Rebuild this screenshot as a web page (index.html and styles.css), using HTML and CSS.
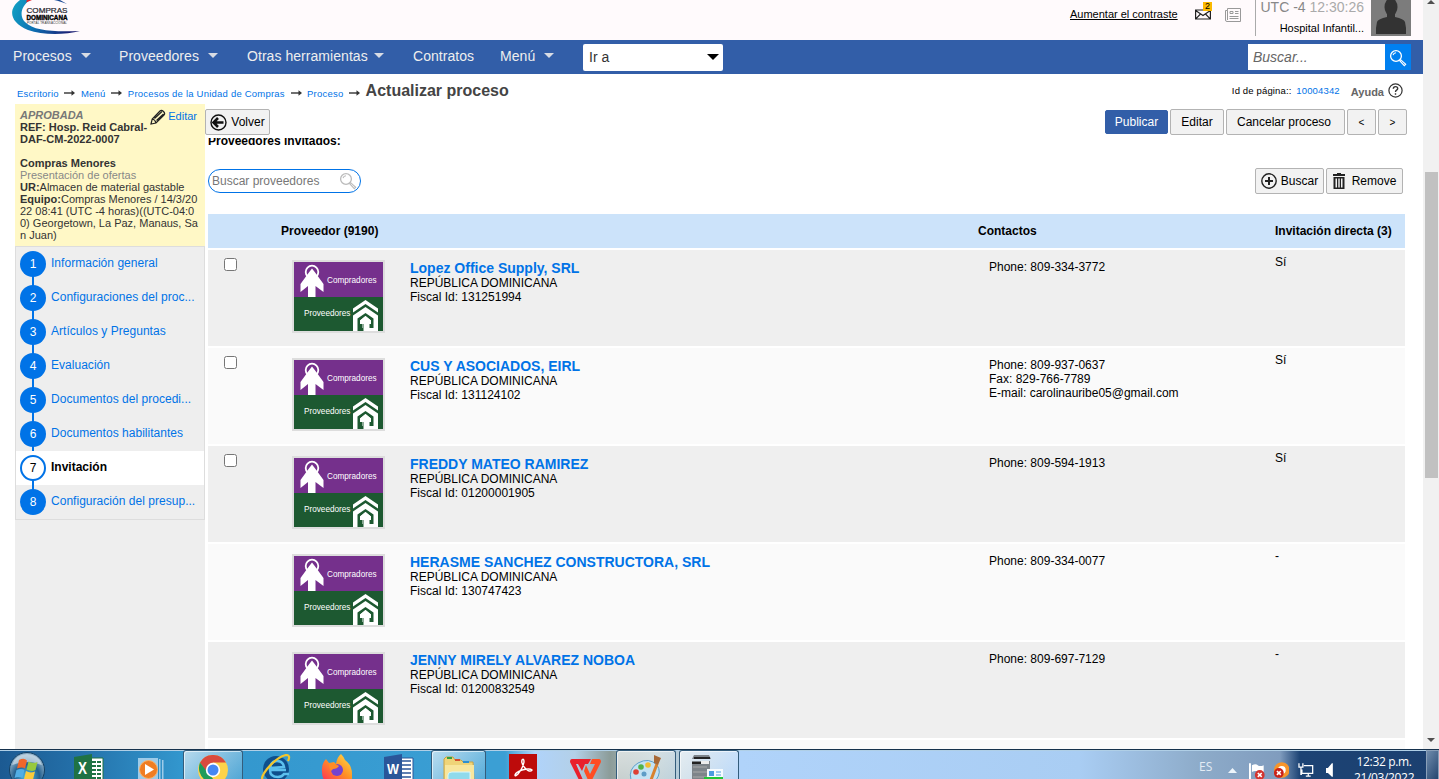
FILE: index.html
```html
<!DOCTYPE html>
<html lang="es">
<head>
    <meta charset="UTF-8">
    <meta name="viewport" content="width=device-width, initial-scale=1.0">
    <title>Actualizar proceso</title>
    <link rel="stylesheet" href="styles.css">
</head>
<body>

    <!-- Iconos compartidos -->
    <svg class="symbols" width="0" height="0">
        <symbol id="arrow" viewBox="0 0 12 6">
            <path d="M0 3h9" stroke="#333" stroke-width="1.4"/>
            <path d="M7.5 .3L11 3 7.5 5.7z" fill="#333"/>
        </symbol>
        <symbol id="lupa" viewBox="0 0 18 18">
            <circle cx="7" cy="7" r="5.4" fill="none" stroke="currentColor" stroke-width="1.3"/>
            <path d="M4 6.2Q4.700 4 7 3.800M10.700 11.700l1-1 5 4.600-1.400 1.400z" fill="none" stroke="currentColor" stroke-width="1.1"/>
        </symbol>
        <symbol id="comprador" viewBox="0 0 24 33">
            <circle cx="12" cy="8" r="6.300" fill="none" stroke="#fff" stroke-width="1.800"/>
            <path d="M12 4.500L15.500 9 23.500 20v8L15.500 22v11H8V22L.5 28v-8L8.500 9z" fill="#fff"/>
        </symbol>
        <symbol id="proveedor" viewBox="0 0 25 31">
            <path d="M0 8.500L12.500 0 25 8.500v4L12.500 4 0 12.500z" fill="#fff"/>
            <path d="M0 15.500L12.500 7 25 15.500V31H15v-7h3.500l-6-6-6 6H10v4H8v-4H5v7H0z" fill="#fff"/>
            <path d="M4.500 31V18.500l8-5.500 8 5.500V28h-4v-5H18v-2.500l-5.500-4.500L7 20.500V23h2.500v8z" fill="#1d5931"/>
            <path d="M12.500 16L18 20.500V24h-3v4h5v3h-9.500v-7H7v-3.500z" fill="#fff"/>
        </symbol>
    </svg>

    <div class="window">
        <div class="page">

            <!-- Cabecera -->
            <header class="header">
                <svg class="brand" width="72" height="40" viewBox="0 0 72 40">
                    <defs>
                        <linearGradient id="swoosh" x1="0" y1="0" x2="1" y2=".2">
                            <stop offset="0" stop-color="#12a3c4"/>
                            <stop offset=".45" stop-color="#0d72b4"/>
                            <stop offset="1" stop-color="#1b1f74"/>
                        </linearGradient>
                    </defs>
                    <path d="M8 0h10C9 6 7 16 13 22c9 9 28 10 55 9C52 35 30 35 16 30-3 22-4 9 8 0z" fill="url(#swoosh)"/>
                    <path d="M14 2.500L20 0h-5z" fill="#e8232a"/>
                    <path d="M42 0h6l7 4C50 2 47 1 42 0z" fill="#1c4d96"/>
                    <text x="14.500" y="13" class="brand-1" textLength="41" lengthAdjust="spacingAndGlyphs">COMPRAS</text>
                    <text x="14.500" y="19.500" class="brand-2" textLength="41" lengthAdjust="spacingAndGlyphs">DOMINICANA</text>
                    <text x="15" y="23.500" class="brand-3" textLength="40">PORTAL TRANSACCIONAL</text>
                </svg>
                <div class="tools">
                    <a class="contrast">Aumentar el contraste</a>
                    <div class="mail">
                        <svg width="16" height="11" viewBox="0 0 16 11" fill="none" stroke="#222" stroke-width="1.200">
                            <path d="M.6 1h14.800v9H.6zM.6 1.500L8 6.500l7.400-5M.8 9.800L5.500 5M15.200 9.800L10.500 5"/>
                        </svg>
                        <span class="badge">2</span>
                    </div>
                    <svg class="news" width="16" height="14" viewBox="0 0 16 14" fill="none" stroke="#999">
                        <path d="M.5 2.500h2v-2h13v13H2q-1.500 0-1.500-1.500zM2.500 2.500V12M4.500 8.500h9M4.500 10.500h9M10 3.500h3.500M10 5.500h3.500"/>
                        <path d="M5 3.500h3v2H5z"/>
                    </svg>
                    <div class="user">
                        <span class="clock">UTC -4 <b>12:30:26</b></span>
                        <span class="hospital">Hospital Infantil...</span>
                    </div>
                    <svg class="avatar" width="40" height="36" viewBox="0 0 40 36">
                        <path fill="#7c7c7c" d="M0 0h40v36H0z"/>
                        <ellipse cx="20" cy="7" rx="6.500" ry="9" fill="#333"/>
                        <path d="M16 12h8v5q9 2 10 5 1.500 6 1 12H5q-.5-6 1-12 1-3 10-5z" fill="#333"/>
                    </svg>
                </div>
            </header>

            <!-- Menú principal -->
            <nav class="nav">
                <a class="item procesos drop">Procesos</a>
                <a class="item proveedores drop">Proveedores</a>
                <a class="item otras drop">Otras herramientas</a>
                <a class="item contratos">Contratos</a>
                <a class="item menu drop">Menú</a>
                <div class="goto">Ir a</div>
                <div class="search">
                    <span class="search-text">Buscar...</span>
                    <span class="search-btn"><svg width="18" height="18"><use href="#lupa"/></svg></span>
                </div>
            </nav>

            <div class="crumbs">
                <a>Escritorio</a><svg><use href="#arrow"/></svg>
                <a>Menú</a><svg><use href="#arrow"/></svg>
                <a>Procesos de la Unidad de Compras</a><svg><use href="#arrow"/></svg>
                <a>Proceso</a><svg><use href="#arrow"/></svg>
                <h1>Actualizar proceso</h1>
                <span class="page-id">Id de página:: <a>10004342</a></span>
                <span class="help">Ayuda</span>
                <svg class="help-icon" viewBox="0 0 15 15" fill="none" stroke="#333">
                    <circle cx="7.500" cy="7.500" r="6.600" stroke-width="1.200"/>
                    <path d="M5.300 5.800q0-2.200 2.200-2.200t2.200 1.900q0 1-1.100 1.700T7.500 9.100M7.500 10.300v1.500" stroke-width="1.400"/>
                </svg>
            </div>

            <div class="main">

                <!-- Resumen y pasos -->
                <aside class="sidebar">
                    <div class="summary">
                        <a class="edit">
                            <svg width="16" height="16" viewBox="0 0 16 16" fill="none" stroke="#222" stroke-width="1.200">
                                <path d="M1 15l1.200-5L10 2q1.500-1.500 3.500.5T14 6l-8 8zM2.200 10q3 .5 3.800 4M4.500 9.500L12 2.500M6.500 11.500l7-6.500"/>
                            </svg>Editar</a>
                        <em>APROBADA</em>
                        <strong>REF: Hosp. Reid Cabral-<br>DAF-CM-2022-0007</strong>
                        <strong class="kind">Compras Menores</strong>
                        <span class="phase">Presentación de ofertas</span>
                        <span><b>UR:</b>Almacen de material gastable</span>
                        <span><b>Equipo:</b>Compras Menores / 14/3/20<br>22 08:41 (UTC -4 horas)((UTC-04:0<br>0) Georgetown, La Paz, Manaus, Sa<br>n Juan)</span>
                    </div>
                    <ol class="steps">
                        <li><i>1</i><a>Información general</a></li>
                        <li><i>2</i><a>Configuraciones del proc...</a></li>
                        <li><i>3</i><a>Artículos y Preguntas</a></li>
                        <li><i>4</i><a>Evaluación</a></li>
                        <li><i>5</i><a>Documentos del procedi...</a></li>
                        <li><i>6</i><a>Documentos habilitantes</a></li>
                        <li class="active"><i>7</i><a>Invitación</a></li>
                        <li><i>8</i><a>Configuración del presup...</a></li>
                    </ol>
                </aside>

                <section class="content">
                    <div class="toolbar">
                        <button class="btn back">
                            <svg width="17" height="17" viewBox="0 0 17 17" fill="none" stroke="#111">
                                <circle cx="8.500" cy="8.500" r="7.500" stroke-width="1.400"/>
                                <path d="M3.500 8.500h10M8 4L3.500 8.500 8 13" stroke-width="2.600"/>
                            </svg>Volver</button>
                        <div class="actions">
                            <button class="btn primary">Publicar</button>
                            <button class="btn b-edit">Editar</button>
                            <button class="btn b-cancel">Cancelar proceso</button>
                            <button class="btn b-step">&lt;</button>
                            <button class="btn b-step">&gt;</button>
                        </div>
                    </div>
                    <div class="label"><span>Proveedores invitados:</span></div>

                    <div class="filter">
                        <div class="filter-box">
                            <span>Buscar proveedores</span>
                            <svg width="18" height="18"><use href="#lupa"/></svg>
                        </div>
                        <div class="filter-actions">
                            <button class="btn b-search">
                                <svg width="16" height="16" viewBox="0 0 16 16" fill="none" stroke="#222">
                                    <circle cx="8" cy="8" r="7.200" stroke-width="1.400"/>
                                    <path d="M8 4v8M4 8h8" stroke-width="2"/>
                                </svg>Buscar</button>
                            <button class="btn b-remove">
                                <svg width="12" height="16" viewBox="0 0 12 16" fill="#222">
                                    <path d="M4 0h4v1h4v2H0V1h4zM.5 4h11v12H.5zM2.500 5.500v9H4v-9zM5.300 5.500v9h1.400v-9zM8 5.500v9h1.500v-9z" fill-rule="evenodd"/>
                                </svg>Remove</button>
                        </div>
                    </div>

                    <!-- Tabla de proveedores -->
                    <div class="table">
                        <div class="row head">
                            <span class="h-prov">Proveedor (9190)</span>
                            <span class="h-cont">Contactos</span>
                            <span class="h-inv">Invitación directa (3)</span>
                        </div>
                        <div class="row">
                            <div class="check"><input type="checkbox"></div>
                            <div class="logo">
                                <div class="buy"><svg><use href="#comprador"/></svg><span>Compradores</span></div>
                                <div class="sell"><span>Proveedores</span><svg><use href="#proveedor"/></svg></div>
                            </div>
                            <div class="info"><a>Lopez Office Supply, SRL</a><span class="country">REPÚBLICA DOMINICANA</span><span>Fiscal Id: 131251994</span></div>
                            <div class="contact"><span>Phone: 809-334-3772</span></div>
                            <div class="invited">Sí</div>
                        </div>
                        <div class="row">
                            <div class="check"><input type="checkbox"></div>
                            <div class="logo">
                                <div class="buy"><svg><use href="#comprador"/></svg><span>Compradores</span></div>
                                <div class="sell"><span>Proveedores</span><svg><use href="#proveedor"/></svg></div>
                            </div>
                            <div class="info"><a>CUS Y ASOCIADOS, EIRL</a><span class="country">REPÚBLICA DOMINICANA</span><span>Fiscal Id: 131124102</span></div>
                            <div class="contact"><span>Phone: 809-937-0637</span><span>Fax: 829-766-7789</span><span>E-mail: carolinauribe05@gmail.com</span></div>
                            <div class="invited">Sí</div>
                        </div>
                        <div class="row">
                            <div class="check"><input type="checkbox"></div>
                            <div class="logo">
                                <div class="buy"><svg><use href="#comprador"/></svg><span>Compradores</span></div>
                                <div class="sell"><span>Proveedores</span><svg><use href="#proveedor"/></svg></div>
                            </div>
                            <div class="info"><a>FREDDY MATEO RAMIREZ</a><span class="country">REPÚBLICA DOMINICANA</span><span>Fiscal Id: 01200001905</span></div>
                            <div class="contact"><span>Phone: 809-594-1913</span></div>
                            <div class="invited">Sí</div>
                        </div>
                        <div class="row">
                            <div class="check"></div>
                            <div class="logo">
                                <div class="buy"><svg><use href="#comprador"/></svg><span>Compradores</span></div>
                                <div class="sell"><span>Proveedores</span><svg><use href="#proveedor"/></svg></div>
                            </div>
                            <div class="info"><a>HERASME SANCHEZ CONSTRUCTORA, SRL</a><span class="country">REPÚBLICA DOMINICANA</span><span>Fiscal Id: 130747423</span></div>
                            <div class="contact"><span>Phone: 809-334-0077</span></div>
                            <div class="invited">-</div>
                        </div>
                        <div class="row">
                            <div class="check"></div>
                            <div class="logo">
                                <div class="buy"><svg><use href="#comprador"/></svg><span>Compradores</span></div>
                                <div class="sell"><span>Proveedores</span><svg><use href="#proveedor"/></svg></div>
                            </div>
                            <div class="info"><a>JENNY MIRELY ALVAREZ NOBOA</a><span class="country">REPÚBLICA DOMINICANA</span><span>Fiscal Id: 01200832549</span></div>
                            <div class="contact"><span>Phone: 809-697-7129</span></div>
                            <div class="invited">-</div>
                        </div>
                        <div class="row"></div>
                    </div>
                </section>
            </div>
        </div>

        <!-- Barra de desplazamiento -->
        <div class="scrollbar">
            <span class="up"></span>
            <span class="thumb"></span>
            <span class="down"></span>
        </div>
    </div>

    <!-- Barra de tareas -->
    <footer class="taskbar">
        <div class="task start">
            <svg width="38" height="29" viewBox="0 0 38 29">
                <defs>
                    <radialGradient id="orb" cx=".5" cy=".7" r=".6">
                        <stop offset="0" stop-color="#4fc0ee"/>
                        <stop offset=".6" stop-color="#23608f"/>
                        <stop offset="1" stop-color="#8badc6"/>
                    </radialGradient>
                </defs>
                <circle cx="19" cy="19" r="17.500" fill="url(#orb)" stroke="#123f63"/>
                <path d="M4 14Q8 3 19 3t15 11Q19 8 4 14z" fill="#d5e3ed" opacity=".65"/>
                <path d="M11 9q5-2.500 8 .5l-2 8q-3-2-8 0z" fill="#f0672a"/>
                <path d="M20.500 10.500q4 2.500 9 .5l-2 8q-4 2-9-.5z" fill="#97c93e"/>
                <path d="M8.500 19q5-2 8 0l-2 8q-4-2-8 0z" fill="#52aee5"/>
                <path d="M18 20q4 2.500 9 .5l-2 8q-5 1.500-9-.5z" fill="#fbcb3b"/>
            </svg>
        </div>
        <div class="task excel">
            <svg width="30" height="26" viewBox="0 0 30 26">
                <path d="M15 4h14v22H15z" fill="#fff" stroke="#1f7244"/>
                <path d="M18 7h4v2h-4zM23 7h4v2h-4zM18 11h4v2h-4zM23 11h4v2h-4zM18 15h4v2h-4zM23 15h4v2h-4zM18 19h4v2h-4zM23 19h4v2h-4zM18 23h4v2h-4zM23 23h4v2h-4z" fill="#1f7244"/>
                <path d="M0 3l18-3v26H0z" fill="#1f7244"/>
                <text x="4" y="20" class="office" textLength="9" lengthAdjust="spacingAndGlyphs">X</text>
            </svg>
        </div>
        <div class="task media">
            <svg width="26" height="22" viewBox="0 0 26 22">
                <path d="M0 0h20v22H0zM21 1h1.500v21H21zM24 2h1.500v20H24z" fill="#9dcbe9"/>
                <circle cx="10.500" cy="11.500" r="9" fill="#f07d22" stroke="#f9b167"/>
                <path d="M7 6l9 5.500L7 17z" fill="#fff"/>
            </svg>
        </div>
        <div class="task chrome open">
            <svg width="30" height="25" viewBox="0 0 30 25">
                <circle cx="15" cy="15" r="15" fill="#fdd34a"/>
                <path d="M2 7.500A15 15 0 0 1 28 7.500H15L9 18.500z" fill="#d94a3d"/>
                <path d="M2 7.500A15 15 0 0 0 7 25h9l-6-7z" fill="#1d9c5a"/>
                <circle cx="15" cy="15" r="7.200" fill="#fff"/>
                <circle cx="15" cy="15" r="5.500" fill="#4587f3"/>
            </svg>
        </div>
        <div class="task ie">
            <svg width="32" height="26" viewBox="0 0 32 26" fill="none">
                <circle cx="16" cy="15" r="13" fill="#0f4f8c"/>
                <path d="M26 16H10q0 7 8 7 4 0 6-3h5M10 14q1-7 7-7t7 6z" stroke="#5cc0ee" stroke-width="2.500"/>
                <path d="M3 26Q0 24 7 15 17 3 26 1q5 0 2 6" stroke="#f3c52c" stroke-width="2.200"/>
            </svg>
        </div>
        <div class="task firefox">
            <svg width="32" height="26" viewBox="0 0 32 26">
                <defs>
                    <linearGradient id="fox" x1="1" y1="0" x2="0" y2="1">
                        <stop offset="0" stop-color="#ffe14a"/>
                        <stop offset=".5" stop-color="#ff9124"/>
                        <stop offset="1" stop-color="#ff3355"/>
                    </linearGradient>
                </defs>
                <path d="M1 18Q0 10 5 5l3 4 5-1 2 2Q16 3 20 0q3 3 4 6 7 5 7 14v6H3q-2-4-2-8z" fill="url(#fox)"/>
                <circle cx="16" cy="16" r="6" fill="#7443cf"/>
                <path d="M8 10q5-2 10 2-2 3-6 3l-2 2q-2-3-2-7z" fill="#ff8c24"/>
            </svg>
        </div>
        <div class="task word">
            <svg width="30" height="26" viewBox="0 0 30 26">
                <path d="M15 4h14v22H15z" fill="#fff" stroke="#2a5699"/>
                <path d="M18 7h9M18 11h9M18 15h9M18 19h9M18 23h9" stroke="#2a5699" stroke-width="1.500"/>
                <path d="M0 3l18-3v26H0z" fill="#2a5699"/>
                <text x="3" y="20" class="office word-letter" textLength="12" lengthAdjust="spacingAndGlyphs">W</text>
            </svg>
        </div>
        <div class="task explorer open">
            <svg width="32" height="24" viewBox="0 0 32 24">
                <path d="M1 3l2-2h7l2 3h6l2 2h10l1 18H1z" fill="#efd478" stroke="#c9a343"/>
                <path d="M4 1h5v2H4z" fill="#35a03e"/>
                <path d="M12 3h5v2h-5z" fill="#d4502e"/>
                <path d="M20 5h6v2h-6z" fill="#2e8fd0"/>
                <path d="M2 9h29v15H2z" fill="#f8e69d"/>
                <path d="M5 24v-5q0-3 4-3h18v8z" fill="#8fdaec" stroke="#d9f7fb"/>
            </svg>
        </div>
        <div class="task adobe">
            <svg width="28" height="25" viewBox="0 0 28 25">
                <path d="M0 0h28v25H0z" fill="#bd0b0b"/>
                <path d="M6 21q1-3 7-5 8-2 10 0-2 3-7-2-4-4-3-8 2-2 2 2-1 6-6 12-3 3-3 1z" fill="none" stroke="#fff" stroke-width="1.400"/>
            </svg>
        </div>
        <div class="task wps">
            <svg width="31" height="21" viewBox="0 0 31 21">
                <path d="M2 0h19l-3 5h-3l-3 7L8 5H6l7 16H9L0 3q0-3 2-3z" fill="#e9202c"/>
                <path d="M16 6l4 9 5-10h-5l2-5h7q2 0 2 3l-9 18h-4l-4-9z" fill="#ff4d22"/>
            </svg>
        </div>
        <div class="task paint open">
            <svg width="34" height="25" viewBox="0 0 34 25">
                <path d="M2 25Q-1 14 9 8q11-6 19 2 5 7-1 15z" fill="#c4e2f3" stroke="#5da0cc"/>
                <circle cx="7" cy="17" r="2.800" fill="#dd4034"/>
                <circle cx="12" cy="12" r="2.800" fill="#52b349"/>
                <circle cx="19" cy="10" r="2.800" fill="#f1bd31"/>
                <circle cx="15" cy="19" r="2.500" fill="#5e9cc6"/>
                <path d="M28 9l-6 16" stroke="#d8822f" stroke-width="3"/>
                <path d="M25 0l7 3-3 7-4-2z" fill="#a86936"/>
            </svg>
        </div>
        <div class="task printer open">
            <svg width="32" height="25" viewBox="0 0 32 25">
                <path d="M2 0h15l2 4H0zM0 6h18v19H0z" fill="#7d848a"/>
                <path d="M2 2h16v2H2zM0 7h10v2H0z" fill="#222"/>
                <path d="M9 6h8v3H9z" fill="#eee"/>
                <path d="M1 12h14M1 17h14M1 22h14" stroke="#aaa"/>
                <path d="M15 14h16v11H15z" fill="#f6fbff"/>
                <path d="M17 16h5v5h-5z" fill="#4b9ce0"/>
                <path d="M24 17h5M24 20h5" stroke="#4b9ce0"/>
                <path d="M12 22h19v3H12z" fill="#21c638"/>
            </svg>
        </div>
        <div class="tray">
            <span class="lang">ES</span>
            <svg class="tray-up" width="9" height="5"><path d="M0 5l4.500-5L9 5z" fill="#eef5fb"/></svg>
            <svg class="tray-flag" width="17" height="17" viewBox="0 0 17 17">
                <path d="M1 0v17" stroke="#fff" stroke-width="2"/>
                <path d="M3 2q4-2 6 0t6 0v7q-4 2-6 0t-6 0z" fill="#fff"/>
                <circle cx="11" cy="12" r="5" fill="#d3342f"/>
                <path d="M9 10l4 4M13 10l-4 4" stroke="#fff" stroke-width="1.600"/>
            </svg>
            <svg class="tray-av" width="17" height="17" viewBox="0 0 17 17">
                <circle cx="9" cy="8" r="6" fill="#fff" stroke="#f7952b" stroke-width="4"/>
                <circle cx="6" cy="11" r="5" fill="#cb2118"/>
                <path d="M4 9l4 4M8 9l-4 4" stroke="#fff" stroke-width="1.600"/>
            </svg>
            <svg class="tray-net" width="16" height="14" viewBox="0 0 16 14" fill="none" stroke="#fff" stroke-width="1.300">
                <path d="M6 2.500h9v8H4v-4M8 13.300h5M10.500 10.500V13M1 0v4h4V0M3 4v7.500h1"/>
            </svg>
            <svg class="tray-vol" width="7" height="14" viewBox="0 0 7 14"><path d="M0 5h2l4-5h1v14H6L2 10H0z" fill="#fff"/></svg>
            <div class="date"><span>12:32 p.m.</span><span>21/03/2022</span></div>
            <span class="show-desktop"></span>
        </div>
    </footer>

</body>
</html>
```
FILE: styles.css
```css
* {
    box-sizing: border-box;
}

body {
    margin: 0;
    width: 1439px;
    height: 779px;
    overflow: hidden;
    font-family: "Liberation Sans", Arial, sans-serif;
    font-size: 12px;
    color: #000;
    background: #fff;
}

a {
    color: #0073e7;
}

.symbols {
    display: block;
    height: 0;
}

.window {
    display: flex;
    height: 749px;
}

.page {
    display: flex;
    flex-direction: column;
    width: 1423px;
    overflow: hidden;
}

/* Cabecera */
.header {
    display: flex;
    justify-content: space-between;
    flex: none;
    height: 40px;
    padding: 0 12px;
    background: #fffafc;
}

.brand-1 {
    font-size: 7px;
    fill: #26262e;
    stroke: #26262e;
    stroke-width: .2px;
}

.brand-2 {
    font-size: 7px;
    font-weight: bold;
    fill: #000;
    stroke: #000;
    stroke-width: .4px;
}

.brand-3 {
    font-size: 3px;
    fill: #333;
}

.tools {
    display: flex;
}

.contrast {
    margin-top: 7px;
    width: 108px;
    color: #000;
    font-size: 11px;
    line-height: 14px;
    text-decoration: underline;
    white-space: nowrap;
}

.mail {
    position: relative;
    margin: 9px 14px 0 17px;
}

.badge {
    position: absolute;
    top: -7px;
    left: 8px;
    width: 9px;
    height: 9px;
    font-size: 9px;
    line-height: 9px;
    text-align: center;
    background: #fbb900;
}

.news {
    margin-top: 8px;
}

.user {
    display: flex;
    flex-direction: column;
    align-items: flex-end;
    width: 109px;
    height: 36px;
    margin: 0 7px 0 14px;
    border-left: 1px solid #aaa;
}

.clock {
    font-size: 14px;
    line-height: 15px;
    color: #888;
    white-space: nowrap;
}

.clock b {
    font-weight: normal;
    color: #aaa;
}

.hospital {
    margin-top: 6px;
    font-size: 11px;
    line-height: 14px;
}

/* Menú principal */
.nav {
    display: flex;
    align-items: center;
    flex: none;
    height: 34px;
    padding: 0 12px 0 13px;
    background: #325ea8;
}

.item {
    display: flex;
    justify-content: space-between;
    align-items: center;
    color: #eee;
    font-size: 14px;
    line-height: 16px;
    margin-top: -2px;
    letter-spacing: .05px;
    white-space: nowrap;
}

.drop::after {
    content: "";
    border: 5px solid transparent;
    border-top-color: #d8dce4;
    border-bottom: 0;
    margin-top: -2px;
}

.procesos {
    width: 78px;
    margin-right: 28px;
}

.proveedores {
    width: 99px;
    margin-right: 29px;
}

.otras {
    width: 137px;
    margin-right: 29px;
}

.contratos {
    width: 62px;
    margin-right: 25px;
}

.menu {
    width: 54px;
    margin-right: 29px;
}

.goto {
    display: flex;
    justify-content: space-between;
    align-items: center;
    width: 140px;
    height: 27px;
    padding: 0 4px 0 6px;
    font-size: 14px;
    color: #333;
    background: #fff;
    border-radius: 2px;
}

.goto::after {
    content: "";
    border: 6px solid transparent;
    border-top-color: #000;
    border-bottom: 0;
}

.search {
    display: flex;
    width: 163px;
    height: 26px;
    margin-left: auto;
}

.search-text {
    flex: 1;
    padding-left: 5px;
    font-size: 14px;
    line-height: 26px;
    font-style: italic;
    color: #666;
    background: #fff;
}

.search-btn {
    width: 26px;
    padding: 5px 0 0 4px;
    color: #fff;
    background: #0080f0;
}

/* Ruta */
.crumbs {
    display: flex;
    align-items: center;
    flex: none;
    height: 30px;
    padding: 8px 20px 0 17px;
    font-size: 9.500px;
    letter-spacing: .22px;
    white-space: nowrap;
}

.crumbs svg {
    width: 12px;
    height: 6px;
    margin: 0 4.500px 0 5.700px;
}

.crumbs h1 {
    margin: -4px 0 0;
    font-size: 16px;
    letter-spacing: 0;
    color: #444;
}

.page-id {
    margin: -5px 0 0 auto;
    letter-spacing: .15px;
}

.page-id a {
    margin-left: 2px;
}

.help {
    margin: -3px 0 0 11px;
    font-size: 11px;
    font-weight: bold;
    letter-spacing: 0;
    color: #666;
}

.crumbs .help-icon {
    width: 15px;
    height: 15px;
    margin: -5px 0 0 4px;
}

.main {
    display: flex;
    flex: 1;
    padding-left: 15px;
    min-height: 0;
}

/* Panel lateral */
.sidebar {
    width: 190px;
    height: 645px;
    background: #eee;
}

.summary {
    position: relative;
    display: flex;
    flex-direction: column;
    height: 142px;
    padding: 5px 0 0 5px;
    font-size: 11px;
    line-height: 12px;
    color: #333;
    background: #fff8c6;
    white-space: nowrap;
}

.summary em {
    font-weight: bold;
    color: #777;
}

.summary .edit {
    position: absolute;
    display: flex;
    top: 5px;
    right: 8px;
    gap: 2px;
    line-height: 14px;
}

.summary .kind {
    margin-top: 12px;
}

.summary .phase {
    color: #888;
}

.steps {
    margin: 0;
    padding: 0;
    height: 274px;
    list-style: none;
    border: 1px solid #ddd;
}

.steps li {
    position: relative;
    display: flex;
    height: 34px;
    padding: 4px 0 0 4px;
}

.steps li:not(:last-child)::after {
    content: "";
    position: absolute;
    left: 16px;
    top: 29px;
    width: 2px;
    height: 10px;
    background: #0073e7;
}

.steps i {
    width: 26px;
    height: 26px;
    margin-right: 5px;
    font-style: normal;
    font-size: 12px;
    line-height: 26px;
    text-align: center;
    color: #fff;
    background: #0073e7;
    border-radius: 50%;
}

.steps a {
    margin-top: 4px;
    line-height: 16px;
    letter-spacing: .03px;
    white-space: nowrap;
}

.steps .active {
    background: #fff;
}

.steps .active i {
    color: #000;
    line-height: 22px;
    background: #fff;
    border: 2px solid #0073e7;
}

.steps .active a {
    font-weight: bold;
    letter-spacing: 0;
    color: #000;
}

/* Contenido */
.content {
    display: flex;
    flex-direction: column;
    width: 1202px;
}

.btn {
    display: flex;
    align-items: center;
    justify-content: center;
    height: 26px;
    padding: 0;
    font-family: inherit;
    font-size: 12px;
    color: #000;
    background: #f2f2f2;
    border: 1px solid #b3b3b3;
    border-radius: 2px;
}

.toolbar {
    display: flex;
    justify-content: space-between;
    flex: none;
    height: 34px;
    padding-top: 5px;
}

.back {
    width: 65px;
    gap: 4px;
}

.actions {
    display: flex;
    gap: 2px;
}

.primary {
    width: 63px;
    height: 24px;
    margin-top: 1px;
    color: #fff;
    background: #325ea8;
    border-color: #325ea8;
}

.b-edit {
    width: 54px;
}

.b-cancel {
    width: 119px;
    padding-right: 3px;
}

.b-step {
    width: 29px;
    font-size: 10px;
}

.label {
    flex: none;
    height: 14px;
    padding-left: 3px;
    overflow: hidden;
    font-size: 12px;
    font-weight: bold;
}

.label span {
    display: block;
    margin-top: -4px;
    line-height: 14px;
}

.filter {
    display: flex;
    justify-content: space-between;
    flex: none;
    height: 62px;
    padding: 16px 4px 0 3px;
}

.filter-box {
    display: flex;
    justify-content: space-between;
    align-items: center;
    width: 153px;
    height: 24px;
    margin-top: 1px;
    padding: 0 3px;
    color: #777;
    border: 1px solid #0073e7;
    border-radius: 12px;
}

.filter-box svg {
    color: #bbb;
}

.filter-actions {
    display: flex;
    gap: 2px;
}

.b-search {
    width: 69px;
    gap: 4px;
}

.b-remove {
    width: 77px;
    gap: 7px;
}

.table {
    display: flex;
    flex-direction: column;
    gap: 2px;
    margin-left: 3px;
    width: 1197px;
}

.row {
    display: grid;
    grid-template-columns: 84px 93px 25px 579px 286px 130px;
    flex: none;
    height: 96px;
    background: #fafafa;
}

.row:nth-child(even) {
    background: #efefef;
}

.row.head {
    grid-template-columns: 770px 297px 130px;
    height: 34px;
    line-height: 34px;
    font-weight: bold;
    background: #cce3fa;
}

.h-prov {
    padding-left: 73px;
}

.check input {
    display: block;
    width: 13px;
    height: 13px;
    margin: 8px 0 0 16px;
}

.logo {
    height: 73px;
    margin-top: 10px;
    border: 2px solid #ddd;
    font-size: 8.200px;
    color: #fff;
}

.buy,
.sell {
    display: flex;
    height: 35px;
    overflow: hidden;
    background: #75308c;
}

.sell {
    height: 34px;
    background: #1d5931;
}

.buy svg {
    width: 24px;
    height: 33px;
    margin: 2px 3px 0 6px;
}

.buy span {
    margin-top: 14px;
    line-height: 10px;
}

.sell svg {
    width: 25px;
    height: 31px;
    margin: 3px 0 0 auto;
    margin-right: 5px;
}

.sell span {
    margin: 12px 0 0 10px;
    line-height: 10px;
}

.info {
    grid-column: 4;
    display: flex;
    flex-direction: column;
    padding-top: 11px;
    line-height: 14px;
}

.info a {
    font-size: 14px;
    font-weight: bold;
}

.country {
    margin-top: 1px;
}

.contact {
    display: flex;
    flex-direction: column;
    padding-top: 10px;
    line-height: 14px;
}

.invited {
    padding-top: 5px;
    line-height: 14px;
}

/* Barra de desplazamiento */
.scrollbar {
    display: flex;
    flex-direction: column;
    align-items: center;
    width: 16px;
    background: #f1f1f1;
}

.up,
.down {
    border: 4px solid transparent;
}

.up {
    border-bottom-color: #505050;
    border-top: 0;
}

.down {
    margin-top: auto;
    margin-bottom: 7px;
    border-top-color: #505050;
    border-bottom: 0;
}

.thumb {
    width: 13px;
    height: 306px;
    margin-top: 168px;
    background: #c1c1c1;
}

/* Barra de tareas */
.taskbar {
    display: flex;
    height: 30px;
    overflow: hidden;
    border-top: 1px solid #16324d;
    box-shadow: inset 0 1px 0 #b0cfe6;
    background: linear-gradient(90deg, #1c5a92 0, #2471aa 80px, #3296cd 180px, #3b9fd4 490px, #3b9fd4 505px, #b0d3fa 535px, #b3d0e8 575px, #8c9c99 610px, #b6c8ca 650px, #b0d3fa 740px, #a9cdf3 1080px, #8dabc9 1200px, #809cbe 1280px, #1c4374 1300px, #1c4070 1439px);
}

.task {
    display: flex;
    justify-content: center;
    flex: none;
}

.task svg {
    margin-top: 4px;
}

.open {
    background: linear-gradient(135deg, rgba(255, 255, 255, .65), rgba(255, 255, 255, .15));
    border: 1px solid #345d7c;
    border-bottom: 0;
    border-radius: 3px 3px 0 0;
    box-shadow: inset 1px 1px 0 rgba(255, 255, 255, .6);
}

.start {
    width: 54px;
}

.start svg {
    margin-top: 1px;
}

.excel {
    width: 69px;
}

.media {
    width: 60px;
    padding-right: 4px;
}

.media svg {
    margin-top: 8px;
}

.chrome {
    width: 60px;
}

.ie {
    width: 66px;
}

.firefox {
    width: 61px;
    padding-right: 6px;
}

.word {
    width: 61px;
    padding-right: 4px;
}

.explorer {
    width: 55px;
    margin-right: 4px;
}

.explorer svg {
    margin-top: 5px;
}

.adobe {
    width: 65px;
}

.wps {
    width: 61px;
}

.wps svg {
    margin-top: 9px;
}

.paint {
    width: 60px;
    margin-right: 3px;
}

.printer {
    width: 60px;
    padding-right: 3px;
}

.office {
    font-size: 17px;
    font-weight: bold;
    fill: #fff;
}

.word-letter {
    font-size: 15px;
}

.tray {
    display: flex;
    align-items: flex-start;
    flex: none;
    width: 240px;
    margin-left: auto;
    font-family: "Open Sans", "Noto Sans", sans-serif;
    color: #fff;
}

.lang {
    width: 30px;
    font-size: 12px;
    line-height: 33px;
    color: #e3ecf5;
}

.tray-up {
    margin-top: 18px;
}

.tray-flag {
    margin: 13px 0 0 12px;
}

.tray-av {
    margin: 12px 0 0 7px;
}

.tray-net {
    margin: 13px 0 0 9px;
}

.tray-vol {
    margin: 13px 0 0 12px;
}

.date {
    display: flex;
    flex-direction: column;
    align-items: center;
    width: 74px;
    margin: 4px 6px 0 15px;
    font-size: 12px;
    line-height: 16px;
    letter-spacing: -.35px;
    white-space: nowrap;
}

.show-desktop {
    width: 13px;
    height: 30px;
    margin-left: auto;
    border: 1px solid #8aa0b9;
    background: linear-gradient(120deg, #6f8bac, #24466f);
}
```
